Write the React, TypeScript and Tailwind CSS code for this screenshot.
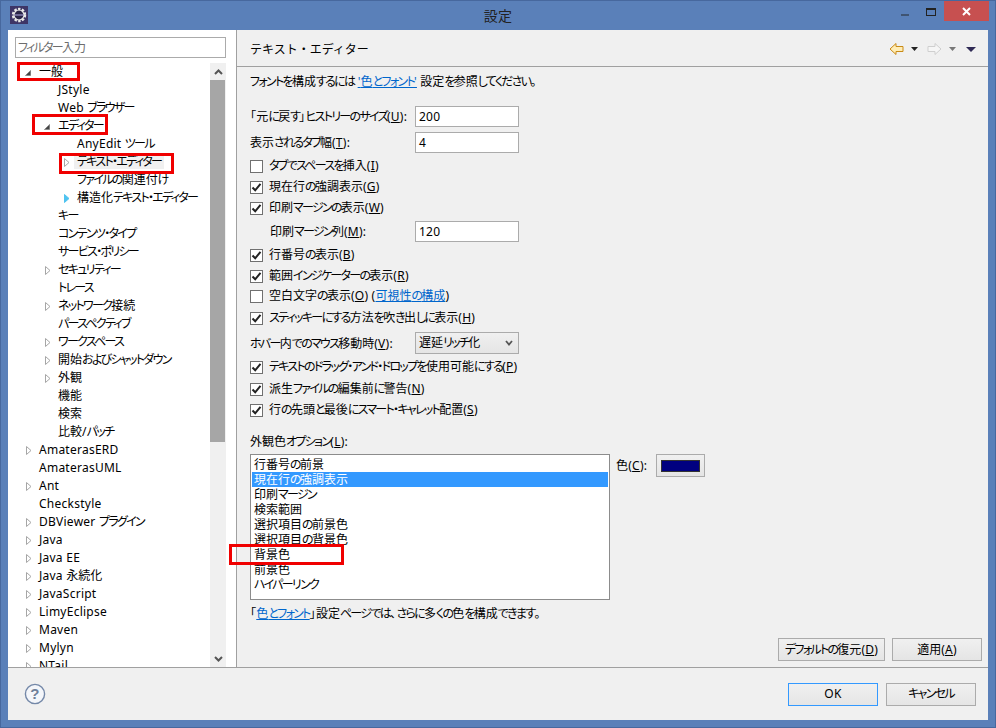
import { Children, type ReactNode } from "react";

type TreeRow = { label: string; indent: number; arrow?: "open" | "closed" | "blue"; selected?: boolean };

const treeRows: TreeRow[] = [
  { label: "一般", indent: 39, arrow: "open" },
  { label: "JStyle", indent: 58 },
  { label: "Web ブラウザー", indent: 58 },
  { label: "エディター", indent: 58, arrow: "open" },
  { label: "AnyEdit ツール", indent: 77 },
  { label: "テキスト・エディター", indent: 77, arrow: "closed", selected: true },
  { label: "ファイルの関連付け", indent: 77 },
  { label: "構造化テキスト・エディター", indent: 77, arrow: "blue" },
  { label: "キー", indent: 58 },
  { label: "コンテンツ・タイプ", indent: 58 },
  { label: "サービス・ポリシー", indent: 58 },
  { label: "セキュリティー", indent: 58, arrow: "closed" },
  { label: "トレース", indent: 58 },
  { label: "ネットワーク接続", indent: 58, arrow: "closed" },
  { label: "パースペクティブ", indent: 58 },
  { label: "ワークスペース", indent: 58, arrow: "closed" },
  { label: "開始およびシャットダウン", indent: 58, arrow: "closed" },
  { label: "外観", indent: 58, arrow: "closed" },
  { label: "機能", indent: 58 },
  { label: "検索", indent: 58 },
  { label: "比較/パッチ", indent: 58 },
  { label: "AmaterasERD", indent: 39, arrow: "closed" },
  { label: "AmaterasUML", indent: 39 },
  { label: "Ant", indent: 39, arrow: "closed" },
  { label: "Checkstyle", indent: 39 },
  { label: "DBViewer プラグイン", indent: 39, arrow: "closed" },
  { label: "Java", indent: 39, arrow: "closed" },
  { label: "Java EE", indent: 39, arrow: "closed" },
  { label: "Java 永続化", indent: 39, arrow: "closed" },
  { label: "JavaScript", indent: 39, arrow: "closed" },
  { label: "LimyEclipse", indent: 39, arrow: "closed" },
  { label: "Maven", indent: 39, arrow: "closed" },
  { label: "Mylyn", indent: 39, arrow: "closed" },
  { label: "NTail", indent: 39, arrow: "closed" },
];

const colorOptions = [
  "行番号の前景",
  "現在行の強調表示",
  "印刷マージン",
  "検索範囲",
  "選択項目の前景色",
  "選択項目の背景色",
  "背景色",
  "前景色",
  "ハイパーリンク",
];

// the reference's UI font has narrow kana, so runs of kana get pulled in
function Jp({ children }: { children: ReactNode }) {
  return (
    <>
      {Children.map(children, (child) =>
        typeof child === "string"
          ? child.split(/([\u3040-\u30ff]+|[\u4e00-\u9fff]+)/).map((run, i) =>
              /^[\u3040-\u30ff]/.test(run) ? (
                <span key={i} className="tracking-[-1.7px]">{run}</span>
              ) : /^[\u4e00-\u9fff]/.test(run) ? (
                <span key={i} className="tracking-normal">{run}</span>
              ) : (
                run
              ),
            )
          : child,
      )}
    </>
  );
}

function TreeArrow({ kind }: { kind: TreeRow["arrow"] }) {
  if (kind === "open") {
    return (
      <svg width="6" height="6" viewBox="0 0 6 6" className="block">
        <path d="M5.6 0.4V5.6H0.4Z" fill="#444" stroke="#777" strokeWidth="0.6" />
      </svg>
    );
  }
  return (
    <svg width="6" height="9" viewBox="0 0 6 9" className="block">
      <path
        d="M0.5 0.5L5 4.5L0.5 8.5Z"
        fill={kind === "blue" ? "#4fc3f0" : "#fff"}
        stroke={kind === "blue" ? "#4fc3f0" : "#a6a6a6"}
        strokeWidth="1"
      />
    </svg>
  );
}

function TreeItem({ row }: { row: TreeRow }) {
  return (
    <div className="relative flex h-[18px] shrink-0 items-center whitespace-nowrap" style={{ paddingLeft: row.indent - 8 }}>
      {row.arrow ? (
        <span
          className={row.arrow === "open" ? "absolute top-[7px]" : "absolute top-[5px]"}
          style={{ left: row.indent - 8 - (row.arrow === "open" ? 14 : 13) }}
        >
          <TreeArrow kind={row.arrow} />
        </span>
      ) : null}
      <span className={row.selected ? "-mx-[3px] bg-[#f0f0f0] px-[3px] py-[1px]" : ""}>
        <Jp>{row.label}</Jp>
      </span>
    </div>
  );
}

function Check({ checked, className, children }: { checked?: boolean; className: string; children: ReactNode }) {
  return (
    <div className={`flex h-5 shrink-0 items-center gap-[6px] whitespace-nowrap ${className}`}>
      <span className="flex h-[13px] w-[13px] shrink-0 items-center justify-center border border-[#707070] bg-white">
        {checked ? (
          <svg width="11" height="11" viewBox="0 0 11 11">
            <path d="M1.5 5.5L4.2 8.3L9.5 1.8" fill="none" stroke="#222" strokeWidth="2" />
          </svg>
        ) : null}
      </span>
      <span>
        <Jp>{children}</Jp>
      </span>
    </div>
  );
}

function FieldRow({ label, value, className }: { label: ReactNode; value: string; className: string }) {
  return (
    <div className={`flex h-[21px] shrink-0 items-center whitespace-nowrap ${className}`}>
      <span className="w-[165px]">{label}</span>
      <span className="flex h-[21px] w-[104px] items-center border border-[#ababab] bg-white px-[3px]">{value}</span>
    </div>
  );
}

function PushButton({ children, className }: { children: ReactNode; className: string }) {
  return (
    <button
      type="button"
      className={`flex h-[23px] items-center justify-center whitespace-nowrap border bg-gradient-to-b from-[#f0f0f0] to-[#e5e5e5] ${className}`}
    >
      <span>
        <Jp>{children}</Jp>
      </span>
    </button>
  );
}

function Annotation({ className }: { className: string }) {
  return <div className={`pointer-events-none absolute border-[3px] border-[#f00000] ${className}`} />;
}

export default function App() {
  return (
    <div className="relative flex h-[728px] w-[996px] flex-col overflow-hidden border border-[#47689e] bg-[#5a80b9] font-['Noto_Sans','Noto_Sans_CJK_JP',sans-serif] text-[12px] leading-none tracking-[0.25px] text-black [font-feature-settings:'palt']">
      {/* title bar */}
      <div className="relative flex h-[29px] shrink-0 items-center justify-center">
        <svg width="18" height="18" viewBox="0 0 18 18" className="absolute left-[9px] top-[5px]">
          <rect width="18" height="18" fill="#3d3566" />
          <circle cx="9" cy="9" r="6" fill="#2a2547" stroke="#e8e8e8" strokeWidth="2.4" strokeDasharray="2.4 1.4" />
          <circle cx="9" cy="9" r="5" fill="none" stroke="#e8e8e8" strokeWidth="1.2" />
          <path d="M4.5 9H13.5" stroke="#8d86b8" strokeWidth="1.4" />
        </svg>
        <span className="text-[14px] text-[#222]">設定</span>
        <div className="absolute right-[6px] top-0 flex items-start">
          <span className="mr-[17px] mt-[13px] h-[2px] w-[8px] bg-[#3f5472]" />
          <span className="mr-[8px] mt-[7px] h-[8px] w-[10px] border border-t-[2px] border-[#222]" />
          <span className="flex h-[20px] w-[45px] items-center justify-center bg-[#c75050]">
            <svg width="9" height="9" viewBox="0 0 9 9">
              <path d="M1 1L8 8M8 1L1 8" stroke="#fff" strokeWidth="2" />
            </svg>
          </span>
        </div>
      </div>

      {/* dialog client area */}
      <div className="mx-[7px] mb-[7px] flex min-h-0 flex-1 flex-col bg-[#f0f0f0]">
        <div className="flex min-h-0 flex-1">
          {/* preference tree */}
          <div className="flex w-[229px] shrink-0 flex-col border-r border-[#a0a0a0] bg-white">
            <div className="ml-[7px] mt-[7px] flex h-[21px] w-[211px] shrink-0 items-center border border-[#ababab] px-[2px] text-[#6d6d6d]">
              <span><Jp>フィルター入力</Jp></span>
            </div>
            <div className="mt-[5px] flex min-h-0 flex-1">
              <div className="flex w-[202px] shrink-0 flex-col overflow-hidden">
                {treeRows.map((row) => (
                  <TreeItem key={row.label} row={row} />
                ))}
              </div>
              <div className="flex w-[16px] shrink-0 flex-col bg-[#f0f0f0]">
                <div className="flex h-[17px] shrink-0 items-center justify-center">
                  <svg width="9" height="6" viewBox="0 0 9 6">
                    <path d="M1 5L4.5 1.5L8 5" fill="none" stroke="#555" strokeWidth="2" />
                  </svg>
                </div>
                <div className="h-[362px] w-[15px] shrink-0 bg-[#a6a6a6]" />
                <div className="mt-auto flex h-[17px] shrink-0 items-center justify-center">
                  <svg width="9" height="6" viewBox="0 0 9 6">
                    <path d="M1 1L4.5 4.5L8 1" fill="none" stroke="#555" strokeWidth="2" />
                  </svg>
                </div>
              </div>
            </div>
          </div>

          {/* preference page */}
          <div className="flex min-w-0 flex-1 flex-col">
            <div className="relative flex h-[37px] shrink-0 items-center border-b border-[#a0a0a0] pl-[13px] pt-[3px] tracking-normal [font-feature-settings:normal]">
              テキスト・エディター
              <svg width="90" height="14" viewBox="0 0 90 14" className="absolute right-[9px] top-[12px]">
                <path d="M1 7L7 1.5V4.5H14V9.5H7V12.5Z" fill="#ffedb5" stroke="#c98a16" />
                <path d="M22 5H29L25.5 9Z" fill="#222" />
                <path d="M52 7L46 1.5V4.5H39V9.5H46V12.5Z" fill="#f6f6f6" stroke="#cfcfcf" />
                <path d="M60 5H67L63.5 9Z" fill="#777" />
                <path d="M77 5H87L82 10Z" fill="#2f2a55" />
              </svg>
            </div>

            <div className="flex min-h-0 flex-1 flex-col px-[13px]">
              <div className="mt-[6px] h-[18px] shrink-0 whitespace-nowrap leading-[18px]">
                <Jp>フォントを構成するには </Jp>
                <span className="text-[#0066cc] underline">'<Jp>色とフォント</Jp>'</span>
                <Jp> 設定を参照してください。</Jp>
              </div>
              <FieldRow
                className="mt-[15px]"
                value="200"
                label={<>「<Jp>元に戻す</Jp>」<Jp>ヒストリーのサイズ</Jp>(<u>U</u>):</>}
              />
              <FieldRow className="mt-[5px]" value="4" label={<><Jp>表示されるタブ幅</Jp>(<u>T</u>):</>} />
              <Check className="mt-[3px]">タブでスペースを挿入(<u>I</u>)</Check>
              <Check checked className="mt-px">現在行の強調表示(<u>G</u>)</Check>
              <Check checked className="mt-px">印刷マージンの表示(<u>W</u>)</Check>
              <div className="mt-[3px] flex h-[21px] shrink-0 items-center whitespace-nowrap">
                <span className="w-[165px] pl-[20px]"><Jp>印刷マージン列</Jp>(<u>M</u>):</span>
                <span className="flex h-[21px] w-[104px] items-center border border-[#ababab] bg-white px-[3px]">120</span>
              </div>
              <Check checked className="mt-[3px]">行番号の表示(<u>B</u>)</Check>
              <Check checked className="mt-px">範囲インジケーターの表示(<u>R</u>)</Check>
              <Check className="mt-0">
                空白文字の表示(<u>O</u>) (<span className="text-[#0066cc] underline"><Jp>可視性の構成</Jp></span>)
              </Check>
              <Check checked className="mt-[2px]">スティッキーにする方法を吹き出しに表示(<u>H</u>)</Check>
              <div className="mt-[4px] flex h-[22px] shrink-0 items-center whitespace-nowrap">
                <span className="w-[165px] pt-px"><Jp>ホバー内でのマウス移動時</Jp>(<u>V</u>):</span>
                <span className="flex h-[22px] w-[104px] items-center justify-between border border-[#ababab] bg-gradient-to-b from-[#f0f0f0] to-[#e5e5e5] pl-[3px] pr-[5px]">
                  <span><Jp>遅延リッチ化</Jp></span>
                  <svg width="8" height="6" viewBox="0 0 8 6">
                    <path d="M1 1L4 4.5L7 1" fill="none" stroke="#555" strokeWidth="1.8" />
                  </svg>
                </span>
              </div>
              <Check checked className="mt-[3px]">テキストのドラッグ・アンド・ドロップを使用可能にする(<u>P</u>)</Check>
              <Check checked className="mt-[2px]">派生ファイルの編集前に警告(<u>N</u>)</Check>
              <Check checked className="mt-px">行の先頭と最後にスマート・キャレット配置(<u>S</u>)</Check>
              <div className="mt-3 flex h-5 shrink-0 items-center"><span><Jp>外観色オプション</Jp>(<u>L</u>):</span></div>

              <div className="mt-[2px] flex shrink-0 items-start">
                <div className="flex h-[146px] w-[360px] shrink-0 flex-col border border-[#8c8c8c] bg-white p-px pt-[2px]">
                  {colorOptions.map((name, i) => (
                    <div
                      key={name}
                      className={`flex h-[15px] shrink-0 items-center px-[2px] ${
                        i === 1 ? "bg-[#3399ff] text-white" : ""
                      }`}
                    >
                      <span><Jp>{name}</Jp></span>
                    </div>
                  ))}
                </div>
                <span className="ml-[6px] mt-[6px] w-[40px] whitespace-nowrap">色(<u>C</u>):</span>
                <span className="flex h-[23px] w-[49px] items-center justify-center border border-[#ababab] bg-gradient-to-b from-[#f0f0f0] to-[#e5e5e5]">
                  <span className="h-[12px] w-[39px] border border-[#333] bg-[#000080]" />
                </span>
              </div>

              <div className="mt-[4px] h-5 shrink-0 whitespace-nowrap leading-5">
                「<span className="text-[#0066cc] underline"><Jp>色とフォント</Jp></span>」<Jp>設定ページでは、さらに多くの色を構成できます。</Jp>
              </div>

              <div className="mb-[6px] mr-[-7px] mt-auto flex shrink-0 justify-end gap-[7px]">
                <PushButton className="w-[107px] border-[#ababab]">デフォルトの復元(<u>D</u>)</PushButton>
                <PushButton className="w-[90px] border-[#ababab]">適用(<u>A</u>)</PushButton>
              </div>
            </div>
          </div>
        </div>

        {/* footer */}
        <div className="flex h-[53px] shrink-0 items-center border-t border-[#a0a0a0] bg-[#f0f0f0] pl-[16px] pr-[12px]">
          <svg width="22" height="22" viewBox="0 0 22 22">
            <circle cx="11" cy="11" r="9.6" fill="#f4f6fa" stroke="#7488a8" strokeWidth="1.4" />
            <text x="11" y="16" textAnchor="middle" fontSize="15" fontWeight="700" fill="#6f7f99" fontFamily="Liberation Sans, sans-serif">?</text>
          </svg>
          <div className="ml-auto flex gap-[8px]">
            <PushButton className="w-[90px] border-[#3399ff]">OK</PushButton>
            <PushButton className="w-[90px] border-[#ababab]">キャンセル</PushButton>
          </div>
        </div>
      </div>

      {/* red markup drawn over the screenshot */}
      <Annotation className="left-[16px] top-[61px] h-[19px] w-[63px]" />
      <Annotation className="left-[31px] top-[113px] h-[21px] w-[76px]" />
      <Annotation className="left-[58px] top-[152px] h-[21px] w-[115px]" />
      <Annotation className="left-[228px] top-[543px] h-[21px] w-[115px]" />
    </div>
  );
}
